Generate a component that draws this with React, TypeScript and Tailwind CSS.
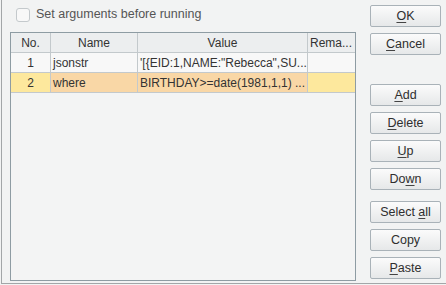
import { ReactNode } from "react"

const font = { fontFamily: '"Liberation Sans", Arial, sans-serif' }

function Btn({ children }: { children: ReactNode }) {
    return (
        <button className="w-[71px] h-[22px] rounded-[2px] border border-[#a9b2b8] bg-gradient-to-b from-[#fbfbfb] to-[#e6e8e9] text-[12.5px] text-[#2e2e2e] leading-none flex items-center justify-center">
            <span>{children}</span>
        </button>
    )
}

const U = ({ c }: { c: string }) => <span className="underline underline-offset-2 decoration-[#444]">{c}</span>

export default function App() {
    const rows = [
        { no: "1", name: "jsonstr", value: "'[{EID:1,NAME:\"Rebecca\",SU...", remark: "", sel: false },
        { no: "2", name: "where", value: "BIRTHDAY>=date(1981,1,1) ...", remark: "", sel: true },
    ]

    return (
        <div style={font} className="w-[446px] h-[285px] bg-[#f2f3f3] overflow-hidden">
            <div className="h-[284px] ml-[1px] border-l border-b border-[#a3a6a8] flex">
                <div className="pl-[8px] pt-[7px] flex flex-col">
                    <label className="flex items-center h-[15px] ml-[6px] gap-[6px] text-[12.5px] text-[#555]">
                        <span className="w-[14px] h-[14px] rounded-[3px] border border-[#c4c9cc] bg-[#f8f8f8]" />
                        Set arguments before running
                    </label>
                    <div className="mt-[10px] w-[346px] h-[249px] border border-[#8e9ca3] bg-[#f3f4f4] text-[12px] text-[#333]">
                        <div className="flex h-[20px] bg-[#eceeef] border-b border-[#c3c9cc]">
                            <div className="w-[40px] border-r border-[#c3c9cc] flex items-center justify-center">No.</div>
                            <div className="w-[87px] border-r border-[#c3c9cc] flex items-center justify-center">Name</div>
                            <div className="w-[170px] border-r border-[#c3c9cc] flex items-center justify-center">Value</div>
                            <div className="flex-1 flex items-center pl-[2px] whitespace-nowrap overflow-hidden">Rema...</div>
                        </div>
                        {rows.map((r) => (
                            <div key={r.no} className="flex h-[20px] border-b border-[#c3c9cc]">
                                <div className={"w-[40px] border-r border-[#c3c9cc] flex items-center justify-center " + (r.sel ? "bg-[#fde89d]" : "bg-[#f8f8f8]")}>{r.no}</div>
                                <div className={"w-[87px] border-r border-[#c3c9cc] flex items-center pl-[2px] " + (r.sel ? "bg-[#f9d7a6]" : "bg-[#f8f8f8]")}>{r.name}</div>
                                <div className={"w-[170px] border-r border-[#c3c9cc] flex items-center pl-[2px] whitespace-nowrap overflow-hidden " + (r.sel ? "bg-[#f9d7a6]" : "bg-[#f8f8f8]")}>{r.value}</div>
                                <div className={"flex-1 " + (r.sel ? "bg-[#fde89d]" : "bg-[#f8f8f8]")}>{r.remark}</div>
                            </div>
                        ))}
                    </div>
                </div>
                <div className="ml-[14px] pt-[5px] flex flex-col">
                    <div className="flex flex-col gap-[6px]">
                        <Btn><U c="O" />K</Btn>
                        <Btn><U c="C" />ancel</Btn>
                    </div>
                    <div className="mt-[29px] flex flex-col gap-[6px]">
                        <Btn><U c="A" />dd</Btn>
                        <Btn><U c="D" />elete</Btn>
                        <Btn><U c="U" />p</Btn>
                        <Btn>Do<U c="w" />n</Btn>
                    </div>
                    <div className="mt-[11px] flex flex-col gap-[6px]">
                        <Btn>Select <U c="a" />ll</Btn>
                        <Btn>Copy</Btn>
                        <Btn><U c="P" />aste</Btn>
                    </div>
                </div>
            </div>
        </div>
    )
}
